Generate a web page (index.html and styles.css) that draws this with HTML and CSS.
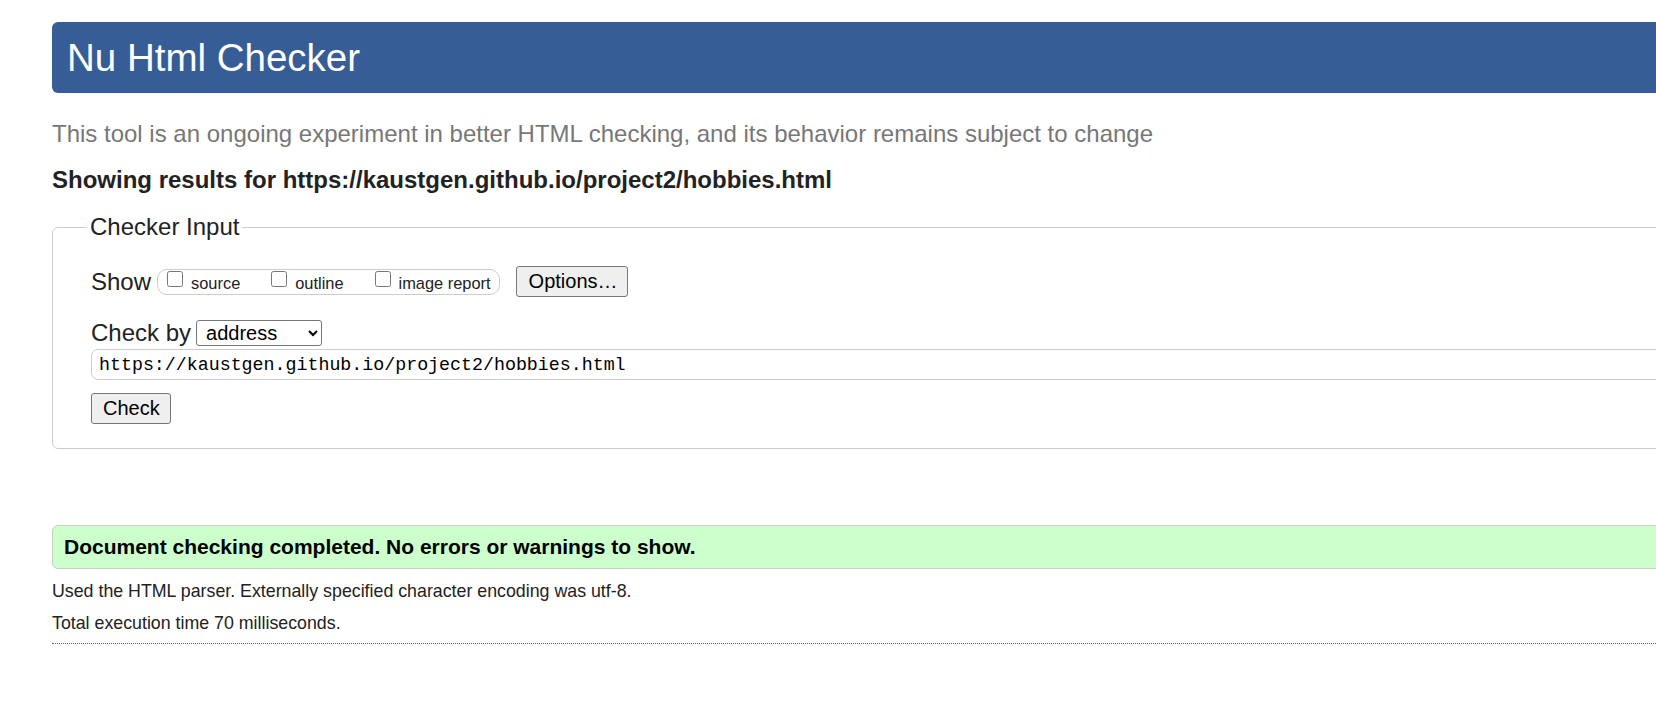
FILE: index.html
```html
<!DOCTYPE html>
<html lang="en">
<head>
<meta charset="utf-8">
<title>Nu Html Checker</title>
<link rel="stylesheet" href="styles.css">
</head>
<body>
<div class="page">
  <h1 class="title">Nu Html Checker</h1>
  <p class="intro">This tool is an ongoing experiment in better HTML checking, and its behavior remains subject to change</p>
  <p class="results-for">Showing results for https://kaustgen.github.io/project2/hobbies.html</p>

  <fieldset class="checker">
    <legend class="checker-legend">Checker Input</legend>
    <div class="show-row">
      <span class="row-label">Show</span>
      <div class="pill">
        <label class="opt"><input type="checkbox" class="cb"><span class="opt-text">source</span></label>
        <label class="opt"><input type="checkbox" class="cb"><span class="opt-text">outline</span></label>
        <label class="opt"><input type="checkbox" class="cb"><span class="opt-text">image report</span></label>
      </div>
      <button class="btn btn-options" type="button">Options…</button>
    </div>
    <div class="by-row">
      <span class="row-label by-label">Check by</span>
      <select class="by-select">
        <option>address</option>
      </select>
    </div>
    <input class="url" type="text" value="https://kaustgen.github.io/project2/hobbies.html">
    <div class="submit-row">
      <button class="btn btn-check" type="button">Check</button>
    </div>
  </fieldset>

  <div class="success">Document checking completed. No errors or warnings to show.</div>
  <p class="meta">Used the HTML parser. Externally specified character encoding was utf-8.</p>
  <p class="meta">Total execution time 70 milliseconds.</p>
  <hr class="dots">
</div>
</body>
</html>
```

FILE: styles.css
```css
html, body {
  overflow: hidden;
}
body {
  margin: 0;
  background: #fff;
  color: #222;
  font-family: "Liberation Sans", Arial, sans-serif;
}
.page {
  margin-left: 52px;
  width: 1720px;
  padding-top: 22px;
}
.title {
  margin: 0;
  height: 71px;
  background: #365d95;
  color: #fff;
  border-radius: 6px;
  padding-left: 15px;
  font-size: 38.5px;
  font-weight: normal;
  line-height: 71px;
}
.intro {
  margin: 27px 0 0;
  color: #777;
  font-size: 24px;
  line-height: 28px;
}
.results-for {
  margin: 18px 0 0;
  font-size: 24px;
  font-weight: bold;
  line-height: 28px;
  color: #222;
}
.checker {
  margin: 19px 0 0;
  border: 1px solid #ccc;
  border-radius: 6px;
  padding: 0 0 24px 38px;
  min-width: 0;
}
.checker-legend {
  margin-left: -4px;
  padding: 0 3px;
  font-size: 24px;
  line-height: 28px;
  color: #222;
}
.show-row {
  display: flex;
  align-items: center;
  margin-top: 25px;
  height: 31px;
}
.row-label {
  font-size: 24px;
  color: #222;
  margin-right: 6px;
}
.pill {
  display: flex;
  align-items: flex-start;
  gap: 31px;
  box-sizing: border-box;
  height: 26px;
  border: 1px solid #ccc;
  border-radius: 10px;
  padding: 0 8px 0 9px;
}
.opt {
  display: flex;
  align-items: flex-start;
  gap: 8px;
}
.cb {
  width: 16px;
  height: 16px;
  margin: 1px 0 0;
}
.opt-text {
  font-size: 16.4px;
  line-height: 22px;
  padding-top: 2px;
  color: #222;
}
.btn {
  box-sizing: border-box;
  height: 31px;
  font-family: "Liberation Sans", Arial, sans-serif;
  font-size: 20px;
  color: #000;
  background: #efefef;
  border: 1px solid #767676;
  border-radius: 3px;
  padding: 0 12px;
}
.btn-options {
  margin-left: 16px;
  width: 112px;
}
.by-row {
  display: flex;
  align-items: center;
  margin-top: 23px;
  height: 26px;
}
.by-label {
  margin-right: 5px;
}
.by-select {
  box-sizing: border-box;
  width: 126px;
  height: 26px;
  font-family: "Liberation Sans", Arial, sans-serif;
  font-size: 20px;
  color: #000;
  background: #fff;
  border: 1px solid #767676;
  border-radius: 3px;
  padding: 0 3px 0 5px;
}
.url {
  display: block;
  box-sizing: border-box;
  margin-top: 3px;
  width: 1600px;
  height: 31px;
  border: 1px solid #ccc;
  border-radius: 7px;
  padding: 0 7px;
  font-family: "Liberation Mono", "DejaVu Sans Mono", monospace;
  font-size: 18.3px;
  color: #000;
  background: #fff;
}
.submit-row {
  margin-top: 13px;
}
.btn-check {
  width: 80px;
  padding: 0 11px;
}
.success {
  margin-top: 76px;
  box-sizing: border-box;
  height: 44px;
  border: 1px solid #ccc;
  border-radius: 6px;
  background: #ccffcc;
  padding-left: 11px;
  font-size: 21px;
  font-weight: bold;
  line-height: 42px;
  color: #000;
}
.meta {
  margin: 12px 0 0;
  font-size: 17.8px;
  line-height: 20px;
  color: #222;
}
.meta + .meta {
  margin-top: 12px;
}
.dots {
  margin: 10px 0 0;
  border: 0;
  border-top: 1px dotted #666;
  height: 0;
}
```
